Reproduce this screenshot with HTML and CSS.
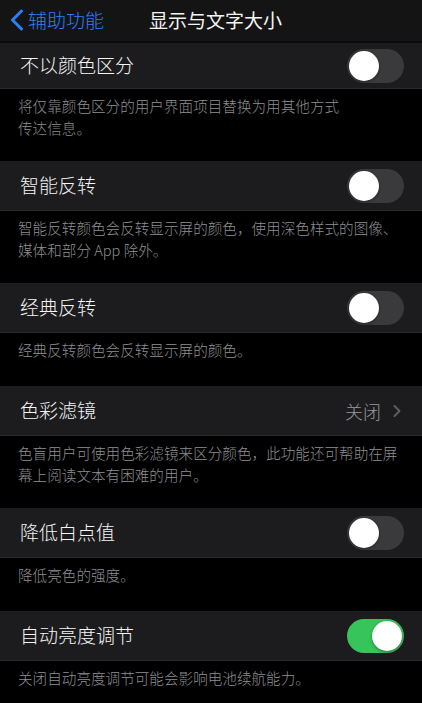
FILE: index.html
```html
<!DOCTYPE html>
<html lang="zh-CN">
<head>
<meta charset="utf-8">
<title>显示与文字大小</title>
<link rel="stylesheet" href="styles.css">
</head>
<body>
<div class="screen">
  <header class="nav">
    <div class="nav-back">
      <svg class="nav-chevron" width="16" height="22" viewBox="0 0 16 22"><path d="M12.5 2 L3.5 11 L12.5 20" fill="none" stroke="#2d7ff9" stroke-width="3" stroke-linecap="round" stroke-linejoin="round"/></svg>
      <span class="nav-back-text">辅助功能</span>
    </div>
    <div class="nav-title">显示与文字大小</div>
    <div></div>
  </header>

  <div class="row row-first">
    <span class="label">不以颜色区分</span>
    <span class="toggle"><span class="knob"></span></span>
  </div>
  <div class="desc">将仅靠颜色区分的用户界面项目替换为用其他方式<br>传达信息。</div>

  <div class="row">
    <span class="label">智能反转</span>
    <span class="toggle"><span class="knob"></span></span>
  </div>
  <div class="desc">智能反转颜色会反转显示屏的颜色，使用深色样式的图像、<br>媒体和部分 App 除外。</div>

  <div class="row">
    <span class="label">经典反转</span>
    <span class="toggle"><span class="knob"></span></span>
  </div>
  <div class="desc">经典反转颜色会反转显示屏的颜色。</div>

  <div class="row">
    <span class="label">色彩滤镜</span>
    <span class="detail">关闭
      <svg class="detail-chevron" width="10" height="14" viewBox="0 0 10 14"><path d="M2.5 2 L7.5 7 L2.5 12" fill="none" stroke="#5c5c61" stroke-width="2" stroke-linecap="round" stroke-linejoin="round"/></svg>
    </span>
  </div>
  <div class="desc">色盲用户可使用色彩滤镜来区分颜色，此功能还可帮助在屏<br>幕上阅读文本有困难的用户。</div>

  <div class="row">
    <span class="label">降低白点值</span>
    <span class="toggle"><span class="knob"></span></span>
  </div>
  <div class="desc">降低亮色的强度。</div>

  <div class="row">
    <span class="label">自动亮度调节</span>
    <span class="toggle toggle-on"><span class="knob"></span></span>
  </div>
  <div class="desc">关闭自动亮度调节可能会影响电池续航能力。</div>
</div>
</body>
</html>
```

FILE: styles.css
```css
* { box-sizing: border-box; }
html, body {
  margin: 0;
  padding: 0;
  background: #000;
}
body {
  font-family: "Noto Sans CJK SC", "Noto Sans", sans-serif;
  font-weight: 300;
  color: #fff;
}
.screen {
  width: 422px;
  height: 703px;
  overflow: hidden;
  background: #000;
  display: flex;
  flex-direction: column;
}
.nav {
  height: 43px;
  flex: none;
  background: #141414;
  border-bottom: 2px solid #0a0a0a;
  display: grid;
  grid-template-columns: 1fr auto 1fr;
  align-items: center;
  padding: 0 0 2px 9px;
}
.nav-back {
  display: flex;
  align-items: center;
  gap: 3px;
}
.nav-chevron { display: block; }
.nav-back-text {
  color: #2d7ff9;
  font-size: 19px;
  line-height: 24px;
}
.nav-title {
  font-size: 19px;
  line-height: 24px;
  font-weight: 400;
  color: #f4f4f4;
}
.row {
  height: 50px;
  flex: none;
  background: #1c1c1e;
  border-bottom: 1px solid #2a2a2c;
  display: flex;
  align-items: center;
  justify-content: space-between;
  padding: 0 18px 0 20px;
}
.row-first {
  height: 46px;
}
.label {
  font-size: 19px;
  line-height: 24px;
  color: #f5f5f5;
  padding-bottom: 1px;
}
.toggle {
  width: 57px;
  height: 34px;
  border-radius: 17px;
  background: #3a3a3c;
  padding: 2px;
  display: flex;
  align-items: center;
}
.knob {
  width: 30px;
  height: 30px;
  border-radius: 50%;
  background: #fff;
  box-shadow: 0 1px 3px rgba(0,0,0,0.4);
}
.toggle-on {
  background: #37c45a;
  justify-content: flex-end;
}
.detail {
  display: flex;
  align-items: center;
  gap: 11px;
  font-size: 18px;
  line-height: 24px;
  color: #98989e;
  padding-right: 2px;
}
.detail-chevron { display: block; }
.desc {
  flex: none;
  min-height: 53px;
  padding: 6px 18px 22px 18px;
  font-size: 14.6px;
  line-height: 22px;
  color: #8e8e93;
  white-space: nowrap;
}
```
